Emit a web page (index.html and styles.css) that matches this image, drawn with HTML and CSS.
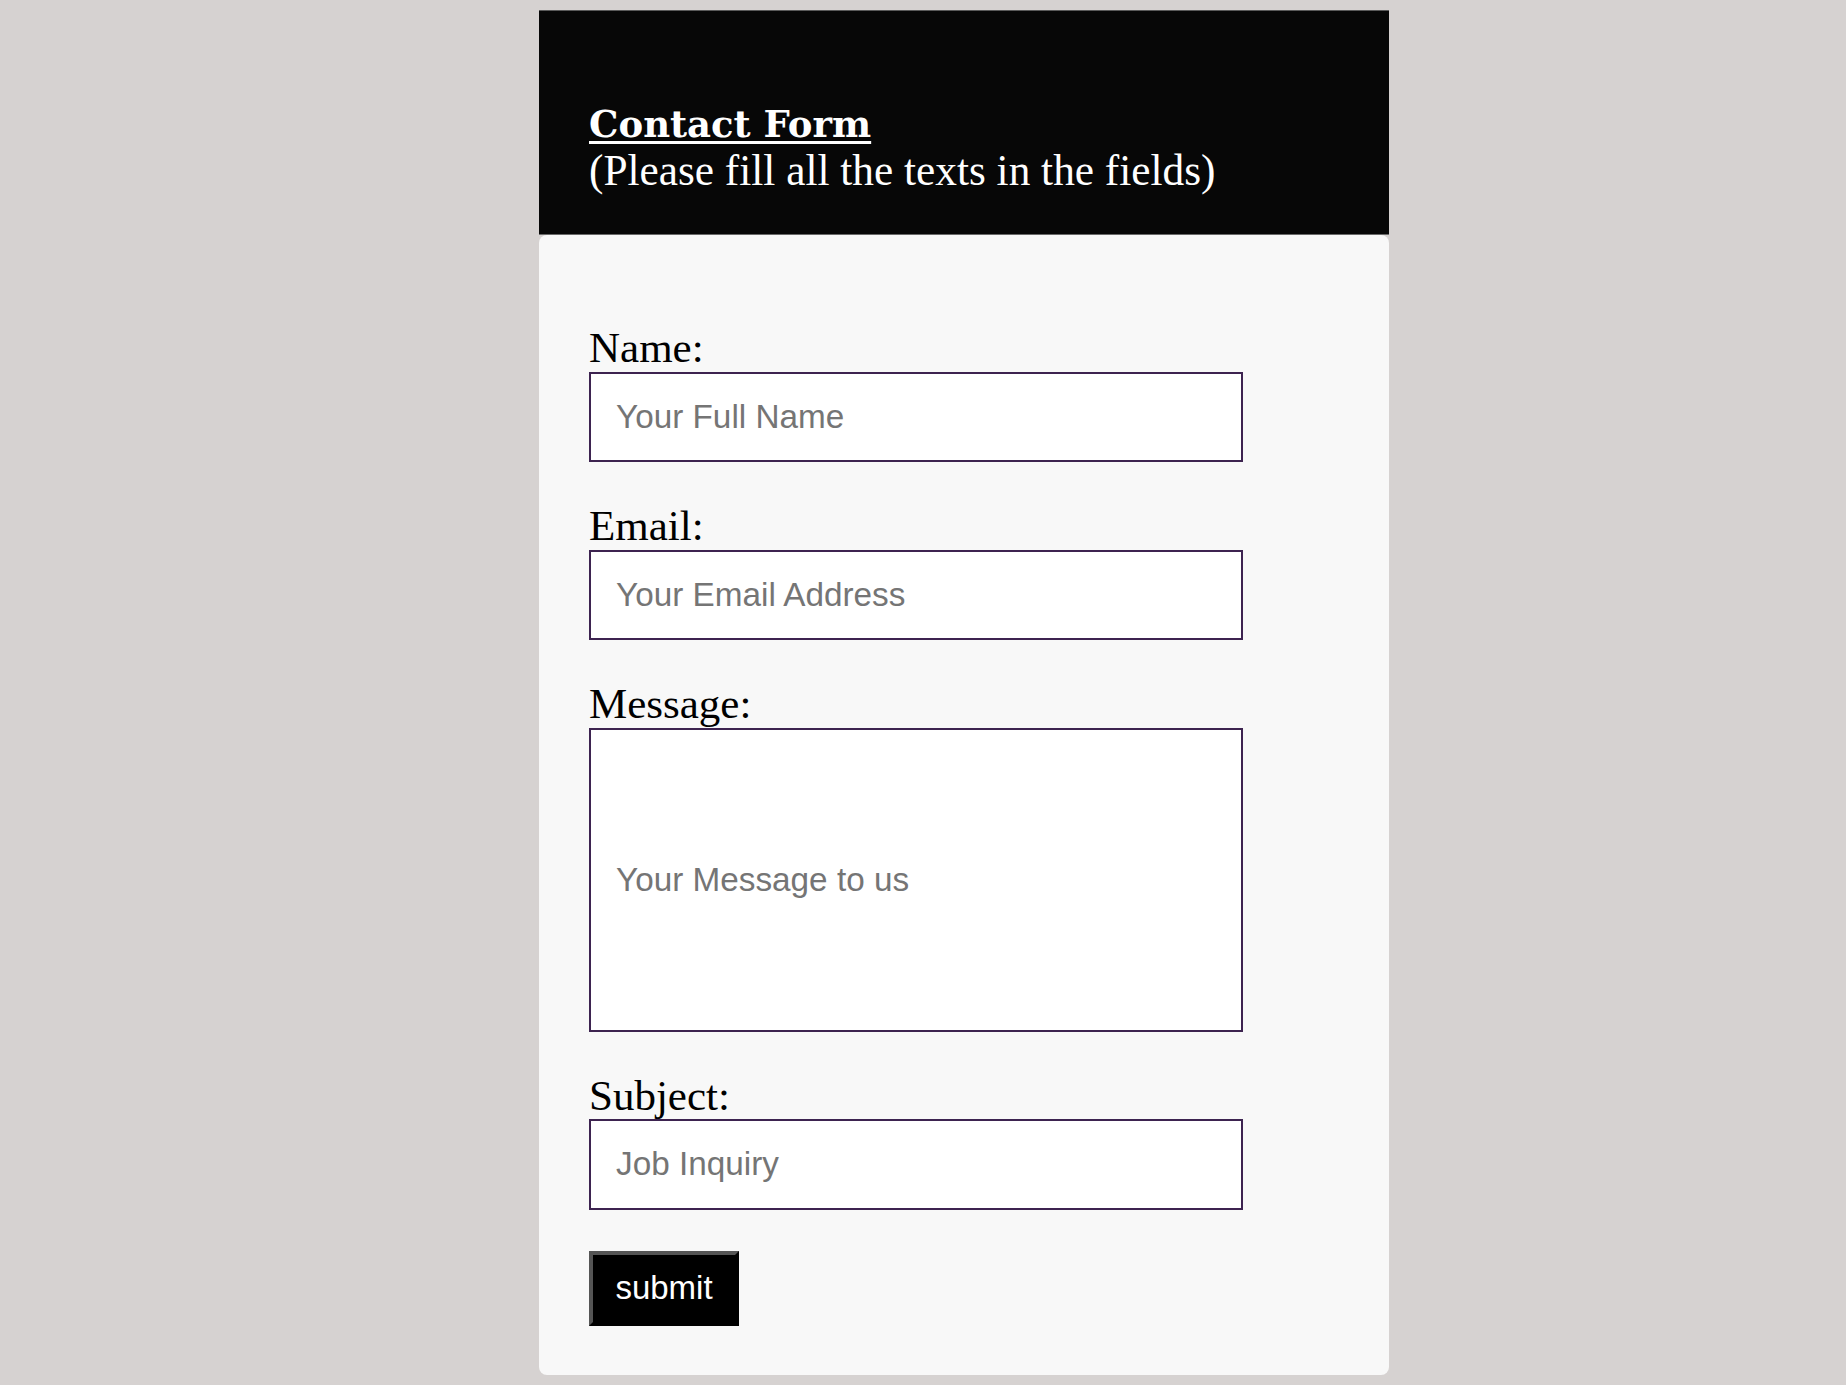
FILE: index.html
```html
<!DOCTYPE html>
<html lang="en">
<head>
<meta charset="utf-8">
<title>Contact Form</title>
<link rel="stylesheet" href="styles.css">
</head>
<body>
<div class="page">
  <header class="head">
    <div class="title">Contact Form</div>
    <div class="subtitle">(Please fill all the texts in the fields)</div>
  </header>
  <form class="card">
    <div class="field">
      <label class="label" for="name">Name:</label>
      <input class="input" id="name" type="text" placeholder="Your Full Name">
    </div>
    <div class="field">
      <label class="label" for="email">Email:</label>
      <input class="input" id="email" type="text" placeholder="Your Email Address">
    </div>
    <div class="field">
      <label class="label" for="msg">Message:</label>
      <textarea class="input area" id="msg" placeholder="Your Message to us"></textarea>
    </div>
    <div class="field">
      <label class="label" for="subj">Subject:</label>
      <input class="input" id="subj" type="text" placeholder="Job Inquiry">
    </div>
    <div class="actions">
      <button class="submit" type="button">submit</button>
    </div>
  </form>
</div>
</body>
</html>
```
FILE: styles.css
```css
html, body {
  margin: 0;
  padding: 0;
}
body {
  background: #d6d2d1;
  font-family: "Liberation Serif", "Times New Roman", serif;
}
.page {
  width: 850px;
  margin: 10px 0 11px 539px;
}
.head {
  background: #070707;
  color: #ffffff;
  border-top: 1px solid #5a5a5a;
  border-bottom: 1px solid #6a6a6a;
  padding: 89px 50px 42px 50px;
}
.title {
  font-family: "DejaVu Serif", Georgia, serif;
  font-weight: bold;
  font-size: 37px;
  line-height: 48px;
  text-decoration: underline;
  text-decoration-thickness: 3px;
  text-underline-offset: 4px;
}
.subtitle {
  font-size: 43.3px;
  line-height: 44px;
}
.card {
  background: #f8f8f8;
  border-radius: 8px;
  padding: 90px 50px 49px 50px;
  display: flex;
  flex-direction: column;
  gap: 41px;
}
.field {
  display: flex;
  flex-direction: column;
}
.label {
  font-size: 43px;
  line-height: 46.5px;
  color: #000;
}
.input {
  box-sizing: border-box;
  width: 654px;
  height: 90.5px;
  margin: 0;
  border: 2px solid #3d2350;
  background: #ffffff;
  padding: 0 25px;
  font-family: "Liberation Sans", Arial, sans-serif;
  font-size: 33.3px;
  color: #333;
  outline: none;
}
.input::placeholder {
  color: #757575;
}
.area {
  height: 304px;
  padding-top: 131px;
  resize: none;
  line-height: normal;
  overflow: hidden;
}
.actions {
  display: flex;
}
.submit {
  box-sizing: border-box;
  width: 150px;
  height: 75px;
  margin: 0;
  padding: 0;
  background: #000;
  color: #fff;
  border-style: solid;
  border-width: 4px;
  border-color: #555555 #000000 #000000 #555555;
  font-family: "Liberation Sans", Arial, sans-serif;
  font-size: 33px;
}
```
